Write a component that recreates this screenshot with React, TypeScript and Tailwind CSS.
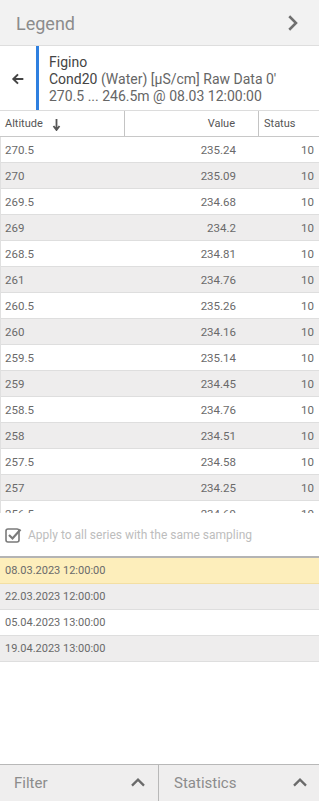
import React from 'react';

const rows = [
  ['270.5', '235.24'],
  ['270', '235.09'],
  ['269.5', '234.68'],
  ['269', '234.2'],
  ['268.5', '234.81'],
  ['261', '234.76'],
  ['260.5', '235.26'],
  ['260', '234.16'],
  ['259.5', '235.14'],
  ['259', '234.45'],
  ['258.5', '234.76'],
  ['258', '234.51'],
  ['257.5', '234.58'],
  ['257', '234.25'],
  ['256.5', '234.69'],
];

const dates = ['08.03.2023 12:00:00', '22.03.2023 12:00:00', '05.04.2023 13:00:00', '19.04.2023 13:00:00'];

function ChevronUp() {
  return (
    <svg width="16" height="16" viewBox="0 0 24 24" className="text-[#6a6a6a]">
      <path d="M3 16 L12 7 L21 16" fill="none" stroke="currentColor" strokeWidth="3.4" />
    </svg>
  );
}

export default function App() {
  return (
    <div className="w-[319px] h-[801px] flex flex-col bg-white text-[#555] font-['Roboto',sans-serif] overflow-hidden">
      {/* Legend header */}
      <div className="h-[46px] flex items-center justify-between pl-4 pr-[17px] pt-[1px] bg-[#f2f2f2] border-b border-[#dedede] shrink-0">
        <span className="text-[18px] text-[#8c8c8c]">Legend</span>
        <svg width="18" height="18" viewBox="0 0 24 24" className="text-[#6f6f6f]">
          <path d="M7 3 L16 12 L7 21" fill="none" stroke="currentColor" strokeWidth="3.4" />
        </svg>
      </div>

      {/* Series */}
      <div className="h-[65px] flex items-stretch border-b border-[#dcdcdc] shrink-0">
        <div className="w-[36px] flex items-center justify-center pt-[2px]">
          <svg width="16" height="16" viewBox="0 0 24 24" className="text-[#444]">
            <path d="M20 12 H5 M12 5 L5 12 L12 19" fill="none" stroke="currentColor" strokeWidth="3" />
          </svg>
        </div>
        <div className="w-[3px] bg-[#2f80e0]" />
        <div className="pl-[10px] pt-[8px] text-[14px] leading-[17px] text-[#666]">
          <div className="text-[#444]">Figino</div>
          <div><span className="text-[#444]">Cond20</span> (Water) [µS/cm] Raw Data 0'</div>
          <div>270.5 ... 246.5m @ 08.03 12:00:00</div>
        </div>
      </div>

      {/* Table header */}
      <div className="h-[26px] flex text-[11px] text-[#555] border-b border-[#c8c8c8] shrink-0">
        <div className="w-[125px] flex items-center pl-[5px] pt-[2px] gap-[9px] border-r border-[#c4c4c4]">
          Altitude
          <svg width="9" height="12" viewBox="0 0 9 12" className="text-[#555]">
            <path d="M4.5 0 V10 M1.5 7 L4.5 11 L7.5 7" fill="none" stroke="currentColor" strokeWidth="1.8" />
          </svg>
        </div>
        <div className="w-[134px] flex items-center justify-end pr-[23px] pt-[2px] border-r border-[#c4c4c4]">Value</div>
        <div className="flex-1 flex items-center pl-[5px] pt-[2px]">Status</div>
      </div>

      {/* Table body */}
      <div className="h-[376px] overflow-hidden border-l border-[#e0e0e0] shrink-0">
        {rows.map(([alt, val], i) => (
          <div
            key={alt}
            className={`h-[26px] flex items-center pt-[2px] text-[11.5px] text-[#6a6a6a] border-b border-[#dedede] ${i % 2 ? 'bg-[#eeeded]' : 'bg-white'}`}
          >
            <div className="w-[124px] pl-[4px]">{alt}</div>
            <div className="w-[134px] text-right pr-[23px]">{val}</div>
            <div className="flex-1 text-right pr-[5px]">10</div>
          </div>
        ))}
      </div>

      {/* Apply checkbox */}
      <div className="h-[45px] flex items-center pl-[5px] gap-[6px] pt-[1px] border-b-2 border-[#b4b4b4] shrink-0">
        <svg width="17" height="17" viewBox="0 0 17 17">
          <rect x="1" y="2" width="13" height="13" rx="2" fill="none" stroke="#7a7a7a" strokeWidth="1.6" />
          <path d="M4 8 L7.5 11.5 L15.5 2.5" fill="none" stroke="#7a7a7a" strokeWidth="2.2" />
        </svg>
        <span className="text-[12px] text-[#bdbdbd]">Apply to all series with the same sampling</span>
      </div>

      {/* Dates */}
      <div className="flex-1">
        {dates.map((d, i) => (
          <div
            key={d}
            className={`h-[26px] flex items-center pl-[5px] pt-[1px] text-[11px] text-[#6a6a6a] border-b ${
              i === 0 ? 'bg-[#fdeebb] border-[#f3dfa3]' : i % 2 ? 'bg-[#eeeded] border-[#dedede]' : 'bg-white border-[#dedede]'
            }`}
          >
            {d}
          </div>
        ))}
      </div>

      {/* Footer */}
      <div className="h-[37px] flex bg-[#efeeee] border-t border-[#b8b8b8] shrink-0">
        <div className="w-[159px] flex items-center justify-between pl-[14px] pr-[12px] border-r border-[#b8b8b8]">
          <span className="text-[15px] text-[#8c8c8c]">Filter</span>
          <ChevronUp />
        </div>
        <div className="flex-1 flex items-center justify-between pl-[15px] pr-[11px]">
          <span className="text-[15px] text-[#8c8c8c]">Statistics</span>
          <ChevronUp />
        </div>
      </div>
    </div>
  );
}
